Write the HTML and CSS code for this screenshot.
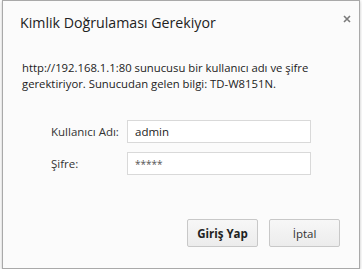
FILE: index.html
```html
<!DOCTYPE html>
<html>
<head>
    <title>Kimlik Doğrulaması Gerekiyor</title>
    <link rel="stylesheet" href="styles.css">
</head>
<body>
    <div class="dialog">
        <div class="dialog-head">
            <h1>Kimlik Doğrulaması Gerekiyor</h1>
            <svg class="close" width="8" height="8" viewBox="0 0 8 8">
                <path d="M1 1L7 7M7 1L1 7" stroke="#7a7a7a" stroke-width="1.6"/>
            </svg>
        </div>
        <p class="message">http://192.168.1.1:80 sunucusu bir kullanıcı adı ve şifre gerektiriyor. Sunucudan gelen bilgi: TD-W8151N.</p>
        <form class="login">
            <label for="user">Kullanıcı Adı:</label>
            <input type="text" id="user" value="admin">
            <label for="pass">Şifre:</label>
            <input type="text" id="pass" class="pass" value="*****">
        </form>
        <div class="buttons">
            <button class="primary">Giriş Yap</button>
            <button>İptal</button>
        </div>
    </div>
</body>
</html>
```

FILE: styles.css
```css
body {
    margin: 0;
    padding: 0;
    background: #ffffff;
    font-family: "Open Sans", sans-serif;
}

.dialog {
    box-sizing: border-box;
    width: 358px;
    height: 269px;
    margin: 0 0 0 2px;
    background: #fbfbfb;
    border: 1px solid #a9a9a9;
    box-shadow: 0 1px 3px rgba(0, 0, 0, 0.25);
    display: flex;
    flex-direction: column;
}

.dialog-head {
    display: flex;
    justify-content: space-between;
    align-items: flex-start;
    padding: 12px 8px 0 17px;
}

h1 {
    margin: 0;
    font-size: 14.2px;
    font-weight: normal;
    color: #222;
}

.close {
    margin-top: 2px;
}

.message {
    margin: 28px 20px 0 19px;
    font-size: 11.3px;
    line-height: 16px;
    color: #222;
}

.login {
    display: grid;
    grid-template-columns: 76px 184px;
    row-gap: 9px;
    align-items: center;
    margin: 28px 0 0 48px;
}

.login label {
    font-size: 11.5px;
    color: #333;
}

.login input {
    box-sizing: border-box;
    height: 23px;
    border: 1px solid #d9d9d9;
    background: #fff;
    padding: 0 7px;
    font-family: "Open Sans", sans-serif;
    font-size: 11.5px;
    color: #222;
    outline: none;
}

.login input.pass {
    color: #555;
    font-size: 10px;
}

.buttons {
    display: flex;
    justify-content: flex-end;
    gap: 11px;
    margin-top: auto;
    padding: 0 19px 21px 0;
}

.buttons button {
    width: 71px;
    height: 28px;
    border: 1px solid #c8c8c8;
    border-radius: 2px;
    background: linear-gradient(#f7f7f7, #ececec);
    font-family: "Open Sans", sans-serif;
    font-size: 11.5px;
    color: #333;
    padding: 0;
}

.buttons button.primary {
    font-weight: bold;
    color: #222;
}
```
